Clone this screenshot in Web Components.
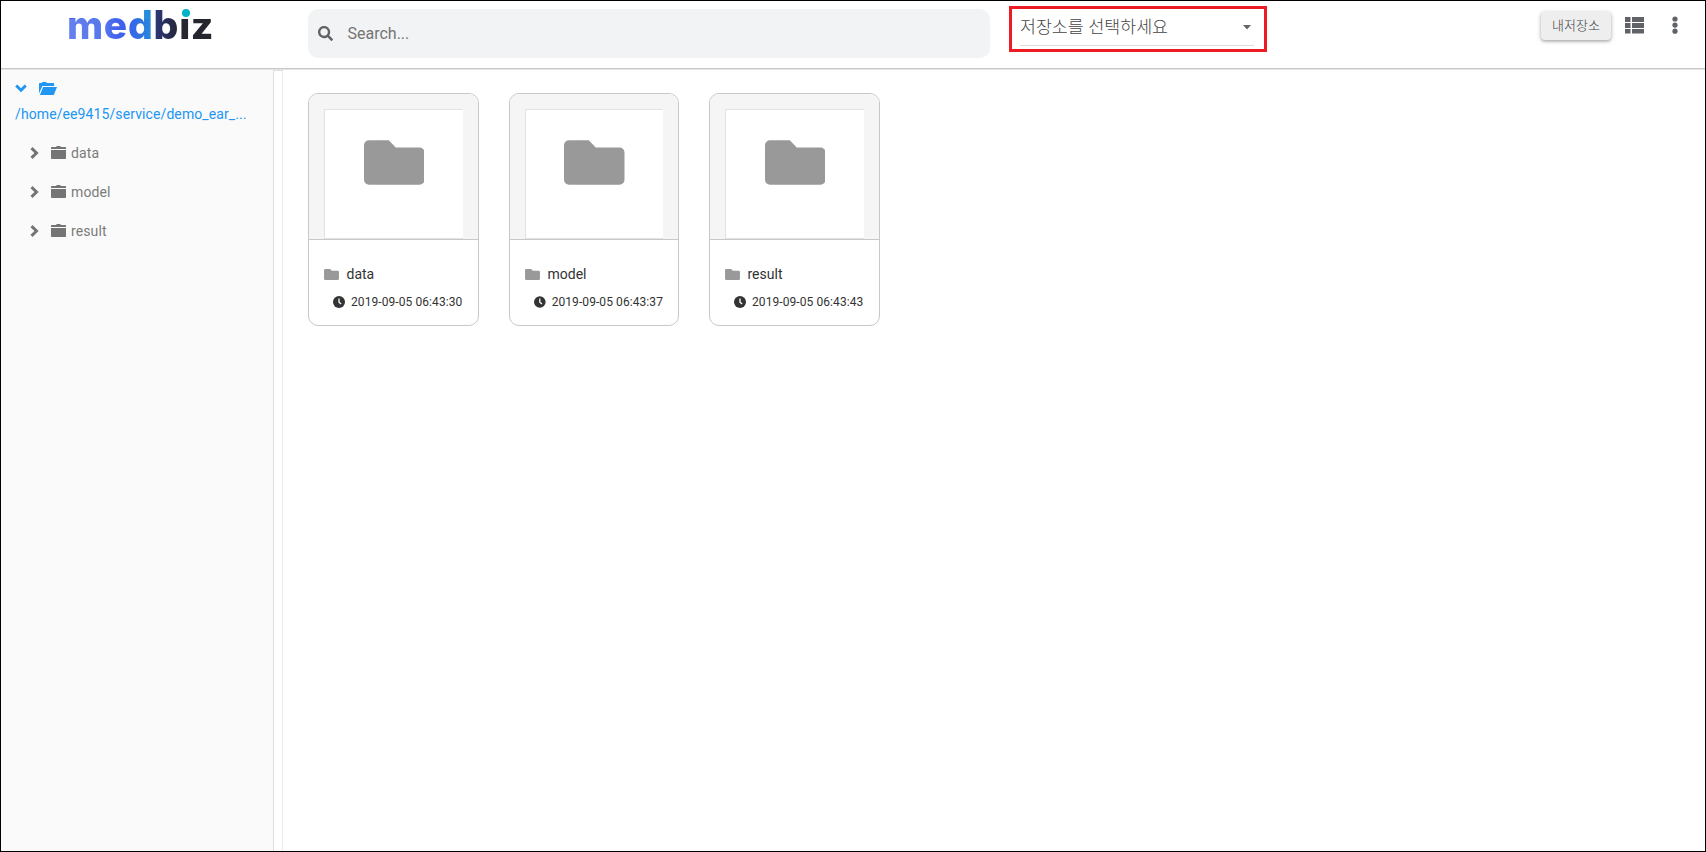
<!DOCTYPE html>
<html lang="ko">
<head>
<meta charset="utf-8">
<title>medbiz</title>
<style>
html,body{margin:0;height:100%;background:#fff;font-family:Roboto,"Noto Sans CJK KR",sans-serif}
</style>
</head>
<body>
<storage-app></storage-app>
<script>
function define(name, html){
  const t=document.createElement('template');
  t.innerHTML=html;
  customElements.define(name,class extends HTMLElement{
    constructor(){super();this.attachShadow({mode:'open'}).append(t.content.cloneNode(true));}
  });
}
define('brand-logo',`<style>
:host{display:block;position:relative;width:150px;height:40px}
span{display:block;font:800 39px/40px Inter,sans-serif;letter-spacing:.7px;white-space:nowrap;width:150px;color:transparent;
background:linear-gradient(90deg,#6680ee 0,#5576ec 38px,#4361ee 50px,#3b63eb 62px,#2f70e2 72px,#2590d8 87px,#2b3775 88px,#262c50 102px,#25262f 114px,#25262b 150px) 0 14px/150px 40px no-repeat,
linear-gradient(90deg,#3b63eb 0,#2590d8 87px,#2b3775 88px,#262c50 112px,transparent 112px) 0 0/150px 14px no-repeat;
-webkit-background-clip:text;background-clip:text}
i{position:absolute;left:115px;top:4px;width:8px;height:8px;border-radius:50%;background:#00b4c8}
</style><span>medbiz</span><i></i>`);
define('search-box',`<style>
:host{display:flex;align-items:center;box-sizing:border-box;width:682px;height:49px;border-radius:10px;background:#f1f3f4;padding-left:10px;font-size:16px;color:#757575}
svg{width:15px;height:15px;margin-right:14.500px;fill:#5f6368}
</style><svg viewBox="0 0 512 512"><path d="M505 442.700 405.300 343c-4.500-4.500-10.600-7-17-7H372c27.600-35.300 44-79.700 44-128C416 93.100 322.900 0 208 0S0 93.100 0 208s93.100 208 208 208c48.300 0 92.700-16.400 128-44v16.300c0 6.400 2.500 12.500 7 17l99.700 99.700c9.400 9.400 24.600 9.400 33.900 0l28.300-28.300c9.400-9.400 9.400-24.600.1-34zM208 336c-70.700 0-128-57.200-128-128 0-70.700 57.200-128 128-128 70.700 0 128 57.200 128 128 0 70.700-57.200 128-128 128z"/></svg><span><slot></slot></span>`);
define('storage-select',`<style>
:host{display:block;box-sizing:border-box;width:258px;height:46px;border:3px solid #ed1c24;padding:3px 10px 0 8px}
div{display:flex;justify-content:space-between;align-items:center;height:33px;border-bottom:1px solid #dcdcdc;color:#444;font-weight:300;padding-right:3px}
span{font-family:"Noto Sans CJK KR",sans-serif;font-size:17.300px;line-height:24px;position:relative;top:-3px}
svg{width:8px;height:5px;fill:#666;position:relative;top:-1px}
</style><div><span><slot></slot></span><svg viewBox="0 0 8 5"><path d="M0 0h8L4 4.500z"/></svg></div>`);
define('raised-button',`<style>
:host{display:block;box-sizing:border-box;width:70px;height:28px;border-radius:4px;background:#eee;color:#3c4044;font-family:"Noto Sans CJK KR",sans-serif;font-size:13px;font-weight:300;line-height:26px;text-align:center;box-shadow:0 1px 4px rgba(0,0,0,.3),0 2px 2px rgba(0,0,0,.1)}
</style><slot></slot>`);
define('app-header',`<style>
:host{display:grid;grid-template-columns:241px 682px 19px 258px 1fr auto;align-items:start;height:67px;padding-left:66px;border-bottom:1px solid #c8c8c8;box-shadow:0 1px 0 #e4e4e4;flex:none;position:relative}
brand-logo{margin-top:4px}search-box{margin-top:8px}
storage-select{grid-column:4;margin-top:5px}
.a{grid-column:6;display:flex;margin-top:11px;padding-right:27px}
.l{width:19px;height:17px;margin:5px 0 0 14px;fill:#5f6368}
.d{width:6px;height:18px;margin:4px 0 0 28px;fill:#5f6368}
</style><brand-logo></brand-logo><search-box>Search...</search-box><storage-select>저장소를 선택하세요</storage-select>
<div class="a"><raised-button>내저장소</raised-button>
<svg class="l" viewBox="0 0 19 17"><path d="M0 0h5.500v5H0zM7 0h12v5H7zM0 6h5.500v5H0zM7 6h12v5H7zM0 12h5.500v4.600H0zM7 12h12v4.600H7z"/></svg>
<svg class="d" viewBox="0 0 6 18"><circle cx="3" cy="3" r="2.600"/><circle cx="3" cy="9.100" r="2.600"/><circle cx="3" cy="15.200" r="2.600"/></svg></div>`);
define('tree-item',`<style>
:host{display:flex;align-items:center;height:39px;padding-left:29px;font-size:14px;color:#7b7b7b;letter-spacing:.1px}
.c{width:9px;height:12px;margin-right:12px;fill:none;stroke:#757575;stroke-width:3}
.f{width:15px;height:13px;margin-right:5px;fill:#757575}
</style><svg class="c" viewBox="0 0 9 12"><path d="M1.500 1.200 6.500 6 1.500 10.800"/></svg><svg class="f" viewBox="0 0 15 13"><path d="M0 4h15v8.200a.8.800 0 0 1-.8.800H.8a.8.800 0 0 1-.8-.8zM0 3V1.600a.6.600 0 0 1 .6-.6H5l.8-1h3.400l.8 1h4.400a.6.600 0 0 1 .6.600V3z"/></svg><span><slot></slot></span>`);
define('folder-tree',`<style>
:host{display:block;box-sizing:border-box;width:272px;background:#fafafa;flex:none}
.r{display:flex;align-items:center;height:14px;padding:11px 0 0 14px}
.c{width:12px;height:8px;margin-right:12px;fill:none;stroke:#2196f3;stroke-width:3}
.o{width:18px;height:13px;fill:#2196f3}
.p{font-size:14px;line-height:20px;color:#2196f3;padding:9px 0 9px 14px;letter-spacing:.1px}
</style><div class="r"><svg class="c" viewBox="0 0 12 8"><path d="M1.200 1.500 6 6.200 10.800 1.500"/></svg><svg class="o" viewBox="0 0 18 13"><path d="M4.200 5H18l-3.200 8H.9zM0 11.500V1.600a.6.600 0 0 1 .6-.6h2l.9-1h3.500l.9 1h6.600a.6.600 0 0 1 .6.600V4H3.400z"/></svg></div>
<div class="p">/home/ee9415/service/demo_ear_...</div>
<tree-item>data</tree-item><tree-item>model</tree-item><tree-item>result</tree-item>`);
define('folder-card',`<style>
:host{display:block;box-sizing:border-box;height:233px;border:1px solid #c8c8c8;border-radius:10px;overflow:hidden;background:#fff}
.t{box-sizing:border-box;height:146px;background:#f5f5f5;border-bottom:1px solid #c8c8c8;padding:15px 15px 0}
.w{box-sizing:border-box;height:130px;background:#fff;border:solid #e2e2e2;border-width:1px 0 1px 1px;display:flex;justify-content:center;padding:30px .5px 0 0}
.b{width:60.500px;height:45px;fill:#999}
.n,.m{display:flex;align-items:center}
.n{height:20px;padding:24px 0 0 15px;font-size:14px;color:#333}
.s{width:15px;height:11px;fill:#999;margin-right:7.500px}
.m{height:16px;padding:10px 15px 0 24px;font-size:12px;color:#333;white-space:nowrap;letter-spacing:.08px}
.k{width:12px;height:12px;margin-right:6px;fill:#333}
</style><div class="t"><div class="w"><svg class="b" viewBox="0 0 61 45"><path d="M5 0h20l7 7.500h24a5 5 0 0 1 5 5V40a5 5 0 0 1-5 5H5a5 5 0 0 1-5-5V5a5 5 0 0 1 5-5z"/></svg></div></div>
<div class="n"><svg class="s" viewBox="0 0 61 45"><path d="M5 0h20l7 7.500h24a5 5 0 0 1 5 5V40a5 5 0 0 1-5 5H5a5 5 0 0 1-5-5V5a5 5 0 0 1 5-5z"/></svg><slot></slot></div>
<div class="m"><svg class="k" viewBox="0 0 12 12"><circle cx="6" cy="6" r="6"/><path d="M6 2.500V6.300L8.200 8" fill="none" stroke="#fff" stroke-width="1.300"/></svg><slot name="time"></slot></div>`);
define('storage-app',`<style>
:host{display:flex;flex-direction:column;box-sizing:border-box;width:1706px;height:852px;border:1px solid #000;background:#fff;overflow:hidden}
.m{display:flex;flex:1;min-height:0;padding-top:1px}
.g{box-sizing:border-box;width:10px;border:1px solid #e0e0e0;border-right-color:#eaeaea;border-bottom:0;flex:none}
.c{display:grid;grid-template-columns:171px 170px 171px;column-gap:30px;padding:23px 0 0 25px;align-items:start}
</style><app-header></app-header><div class="m"><folder-tree></folder-tree><div class="g"></div><div class="c">
<folder-card>data<span slot="time">2019-09-05 06:43:30</span></folder-card>
<folder-card>model<span slot="time">2019-09-05 06:43:37</span></folder-card>
<folder-card>result<span slot="time">2019-09-05 06:43:43</span></folder-card></div></div>`);
</script>
</body>
</html>
